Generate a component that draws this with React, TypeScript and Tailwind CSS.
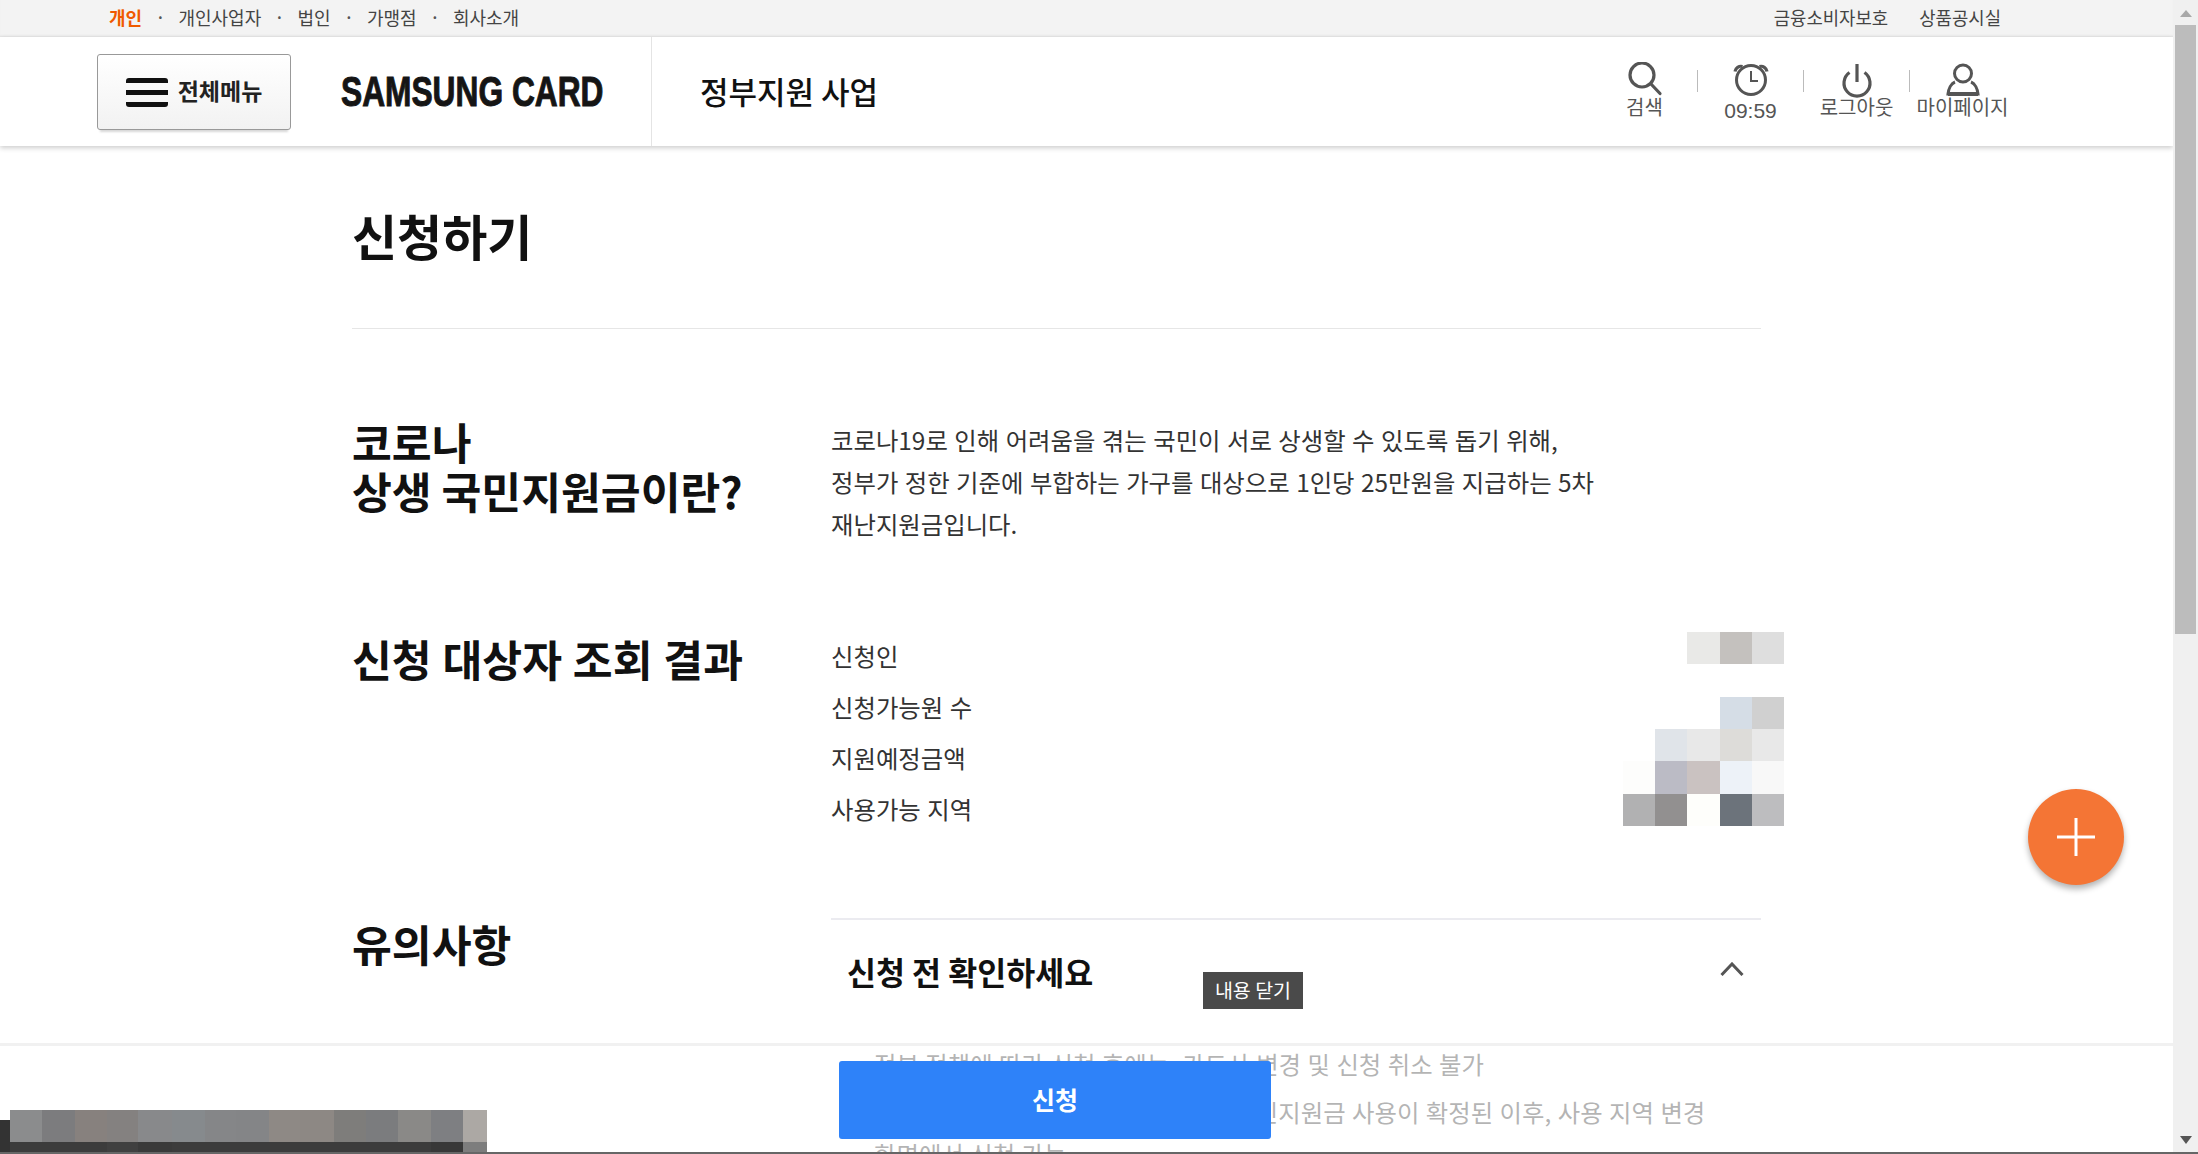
const topLinks = ['개인', '개인사업자', '법인', '가맹점', '회사소개'];

const resultRows = ['신청인', '신청가능원 수', '지원예정금액', '사용가능 지역'];

// blurred values on the right of the result list, 5 x 5 cells
const blurCells = [
  'bg-transparent', 'bg-transparent', 'bg-[#e9e9e7]', 'bg-[#c4c1be]', 'bg-[#dedede]',
  'bg-transparent', 'bg-transparent', 'bg-transparent', 'bg-transparent', 'bg-transparent',
  'bg-transparent', 'bg-transparent', 'bg-transparent', 'bg-[#d5dde6]', 'bg-[#d0d0d0]',
  'bg-transparent', 'bg-[#e0e4e9]', 'bg-[#e8e8e8]', 'bg-[#dddcd9]', 'bg-[#e8e8e8]',
  'bg-[#fdfdfc]', 'bg-[#bbbbc5]', 'bg-[#cac2c1]', 'bg-[#edf2f8]', 'bg-[#f8f8f8]',
  'bg-[#b1b1b2]', 'bg-[#929090]', 'bg-[#fefefb]', 'bg-[#6c737b]', 'bg-[#bdbdbf]',
];

const bottomBlur = [
  ['w-[32px]', 'bg-[#8b8c8d]', 'bg-[#3c3c3c]'],
  ['w-[33px]', 'bg-[#7c7c7e]', 'bg-[#3c3c3c]'],
  ['w-[32px]', 'bg-[#87817e]', 'bg-[#3c3c3c]'],
  ['w-[31px]', 'bg-[#848180]', 'bg-[#404040]'],
  ['w-[34px]', 'bg-[#88898b]', 'bg-[#3a3a3a]'],
  ['w-[33px]', 'bg-[#868a8d]', 'bg-[#3c3c3c]'],
  ['w-[31px]', 'bg-[#858688]', 'bg-[#3c3c3c]'],
  ['w-[33px]', 'bg-[#848587]', 'bg-[#3c3c3c]'],
  ['w-[31px]', 'bg-[#8e8985]', 'bg-[#3c3c3c]'],
  ['w-[34px]', 'bg-[#8d8884]', 'bg-[#3c3c3c]'],
  ['w-[32px]', 'bg-[#7e7d7b]', 'bg-[#3c3c3c]'],
  ['w-[32px]', 'bg-[#7b7c7e]', 'bg-[#3c3c3c]'],
  ['w-[33px]', 'bg-[#8a8987]', 'bg-[#3c3c3c]'],
  ['w-[32px]', 'bg-[#7e7f82]', 'bg-[#383838]'],
  ['w-[24px]', 'bg-[#aca8a4]', 'bg-[#7d7d7d]'],
];

function SearchIcon() {
  return (
    <svg width="40" height="36" viewBox="0 0 40 36" fill="none" stroke="#555" strokeWidth="3.200">
      <circle cx="17" cy="13" r="12" />
      <path d="M26 22l9 9.500" strokeLinecap="round" />
    </svg>
  );
}

function ClockIcon() {
  return (
    <svg width="40" height="36" viewBox="0 0 40 36" fill="none" stroke="#555" strokeWidth="3">
      <circle cx="20" cy="18" r="14.500" />
      <path d="M20 9v10h7" strokeWidth="2" />
      <path d="M4 9.500C4.500 6 8 3.500 11.500 4.500" strokeWidth="3.200" />
      <path d="M36 9.500C35.500 6 32 3.500 28.500 4.500" strokeWidth="3.200" />
    </svg>
  );
}

function PowerIcon() {
  return (
    <svg width="40" height="36" viewBox="0 0 40 36" fill="none" stroke="#555" strokeWidth="3.200">
      <path d="M12.500 10.500a13 13 0 1 0 15 0" />
      <path d="M20 2v18" />
    </svg>
  );
}

function UserIcon() {
  return (
    <svg width="40" height="36" viewBox="0 0 40 36" fill="none" stroke="#555" strokeWidth="3">
      <circle cx="20" cy="11.500" r="8.500" />
      <path d="M12 20C8 21.500 5.500 27 5 32h30C34.500 27 32 21.500 28 20" />
      <path d="M5 32h30" strokeWidth="4" />
    </svg>
  );
}

function ToolItem({ icon, label, labelClass }: { icon: React.ReactNode; label: string; labelClass?: string }) {
  return (
    <div className="flex w-[105px] flex-col items-center pt-[25px]">
      {icon}
      <span className={`mt-[-2px] whitespace-nowrap text-[20px] leading-[22px] text-[#555] ${labelClass ?? ''}`}>{label}</span>
    </div>
  );
}

function ToolDivider() {
  return <span className="mt-[33px] h-[22px] w-[1px] bg-[#bbb]" />;
}

export default function App() {
  return (
    <div className="flex h-[1154px] w-[2198px] flex-col overflow-hidden bg-white font-['Noto_Sans_CJK_KR','Noto_Sans',sans-serif]">
      <div className="flex min-h-0 flex-1">
        <div className="relative w-[2173px] overflow-hidden">
          {/* top strip */}
          <div className="flex h-[37px] items-center justify-between bg-[#f3f3f3] pb-[2px] pl-[109px] pr-[172px] text-[#444] shadow-[inset_0_-2px_2px_-1px_#e4e4e4]">
            <ul className="flex items-center gap-[14px] text-[18px]">
              {topLinks.map((link, i) => (
                <li key={link} className="flex items-center gap-[14px]">
                  {i > 0 && <span className="text-[14px] font-bold text-[#555]">·</span>}
                  <span className={i === 0 ? 'font-bold text-[#f05a00]' : ''}>{link}</span>
                </li>
              ))}
            </ul>
            <div className="flex gap-[31px] text-[17.800px]">
              <span>금융소비자보호</span>
              <span>상품공시실</span>
            </div>
          </div>

          {/* header */}
          <header className="flex h-[109px] items-stretch bg-white pl-[97px] pr-[158px] shadow-[0_2px_5px_rgba(0,0,0,0.2)]">
            <button
              type="button"
              className="mt-[17px] flex h-[76px] w-[194px] items-center justify-center gap-[10px] rounded-[3px] border border-[#999] bg-gradient-to-b from-white to-[#f2f2f2] shadow-[0_5px_2px_-3px_#d8d8d8]"
            >
              <span className="flex h-[29px] w-[42px] flex-col justify-between">
                <i className="h-[5px] rounded-t-[3px] bg-[#111]" />
                <i className="h-[5px] bg-[#111]" />
                <i className="h-[5px] rounded-b-[3px] bg-[#111]" />
              </span>
              <span className="mb-[4px] text-[23px] font-bold text-[#222]">전체메뉴</span>
            </button>
            <div className="ml-[50px] flex w-[310px] items-center">
              <span className="origin-left scale-x-[0.755] whitespace-nowrap font-['Liberation_Sans',sans-serif] text-[42px] font-bold text-[#151515] [-webkit-text-stroke:1px_#151515]">
                SAMSUNG CARD
              </span>
            </div>
            <div className="flex flex-1 items-center border-l border-[#e4e4e4] pl-[48px]">
              <span className="text-[31px] font-medium text-[#111]">정부지원 사업</span>
            </div>
            <div className="flex items-start">
              <ToolItem icon={<SearchIcon />} label="검색" />
              <ToolDivider />
              <ToolItem icon={<ClockIcon />} label="09:59" labelClass="mt-[2px] font-['Liberation_Sans',sans-serif] !text-[21px]" />
              <ToolDivider />
              <ToolItem icon={<PowerIcon />} label="로그아웃" />
              <ToolDivider />
              <ToolItem icon={<UserIcon />} label="마이페이지" />
            </div>
          </header>

          {/* page body */}
          <main className="ml-[352px] w-[1409px]">
            <div className="flex h-[183px] items-center border-b border-[#e6e6e6] pb-[6px]">
              <h1 className="text-[49px] font-bold leading-none text-[#111]">신청하기</h1>
            </div>

            <section className="mt-[88px] flex">
              <h2 className="w-[479px] text-[43.300px] font-bold leading-[49px] text-[#111]">
                코로나
                <br />
                상생 국민지원금이란?
              </h2>
              <p className="mt-[2px] text-[24.400px] leading-[42px] text-[#333] [word-spacing:1px]">
                코로나19로 인해 어려움을 겪는 국민이 서로 상생할 수 있도록 돕기 위해,
                <br />
                정부가 정한 기준에 부합하는 가구를 대상으로 1인당 25만원을 지급하는 5차
                <br />
                재난지원금입니다.
              </p>
            </section>

            <section className="mt-[85px] flex">
              <h2 className="mt-[4px] w-[479px] text-[43.300px] font-bold leading-[49px] text-[#111] [word-spacing:1px]">
                신청 대상자 조회 결과
              </h2>
              <div className="flex flex-1 justify-between">
                <ul className="text-[24.400px] leading-[51px] text-[#333] [word-spacing:1px]">
                  {resultRows.map((row) => (
                    <li key={row}>{row}</li>
                  ))}
                </ul>
                <div className="mr-[-23px] mt-[2px] grid h-fit grid-cols-[32px_32px_33px_32px_32px] grid-rows-[32px_33px_32px_32px_33px_32px]">
                  {blurCells.map((cell, i) => (
                    <span key={i} className={cell} />
                  ))}
                </div>
              </div>
            </section>

            <section className="mt-[84px] flex">
              <h2 className="mt-[1px] w-[479px] text-[43.300px] font-bold leading-[49px] text-[#111]">유의사항</h2>
              <div className="relative flex-1 border-t-2 border-[#ebebf0]">
                <div className="flex h-[123px] items-start justify-between pl-[16px] pr-[17px] pt-[26px]">
                  <h3 className="text-[31.500px] font-bold leading-[50px] text-[#111]">신청 전 확인하세요</h3>
                  <svg width="24" height="14" viewBox="0 0 24 14" fill="none" stroke="#555" strokeWidth="3" className="mt-[16px]">
                    <path d="M1.500 13L12 2l10.500 11" />
                  </svg>
                </div>
                <span className="absolute left-[372px] top-[52px] flex h-[37px] w-[100px] items-center justify-center bg-[#4a4a4a] pb-[2px] text-[19.500px] text-white">
                  내용 닫기
                </span>
                <ul className="pl-[43px] text-[24.400px] leading-[42px] text-[#444] [word-spacing:1px]">
                  <li className="mb-[6px]">정부 정책에 따라 신청 후에는, 카드사 변경 및 신청 취소 불가</li>
                  <li>
                    신청 후 카드 사용 지역 변경은 상생 국민지원금 사용이 확정된 이후, 사용 지역 변경
                    <br />
                    화면에서 신청 가능
                  </li>
                </ul>
              </div>
            </section>
          </main>

          {/* floating add button */}
          <button
            type="button"
            className="absolute right-[49px] top-[789px] flex h-[96px] w-[96px] items-center justify-center rounded-full bg-[#f47535] shadow-[0_4px_6px_rgba(0,0,0,0.3)]"
          >
            <svg width="38" height="38" viewBox="0 0 38 38" stroke="#fff" strokeWidth="3">
              <path d="M19 0v38M0 19h38" />
            </svg>
          </button>

          {/* fixed apply bar */}
          <div className="absolute bottom-0 left-0 right-0 flex h-[109px] justify-start border-t-[3px] border-[#f1f1f1] bg-white/60 pl-[839px] pt-[15px]">
            <button
              type="button"
              className="h-[78px] w-[432px] rounded-[3px] bg-[#2e82f9] text-[25px] font-bold text-white"
            >
              신청
            </button>
          </div>

          {/* blurred account strip, bottom left */}
          <div className="absolute bottom-0 left-0 flex items-end">
            <span className="h-[32px] w-[10px] bg-[#333]" />
            {bottomBlur.map(([width, top, bottom], i) => (
              <span key={i} className={`flex flex-col ${width}`}>
                <i className={`h-[32px] ${top}`} />
                <i className={`h-[10px] ${bottom}`} />
              </span>
            ))}
          </div>
        </div>

        {/* browser scrollbar */}
        <div className="flex w-[25px] flex-col items-center bg-[#f0f0f0]">
          <svg width="14" height="25" viewBox="0 0 14 25" fill="#a8a8a8">
            <path d="M1 17l6-7 6 7z" />
          </svg>
          <div className="h-[609px] w-[21px] bg-[#bcbcbc]" />
          <svg width="14" height="14" viewBox="0 0 14 14" fill="#555" className="mb-[5px] mt-auto">
            <path d="M1 3h12l-6 8z" />
          </svg>
        </div>
      </div>
      <div className="h-[2px] bg-[#666]" />
    </div>
  );
}
